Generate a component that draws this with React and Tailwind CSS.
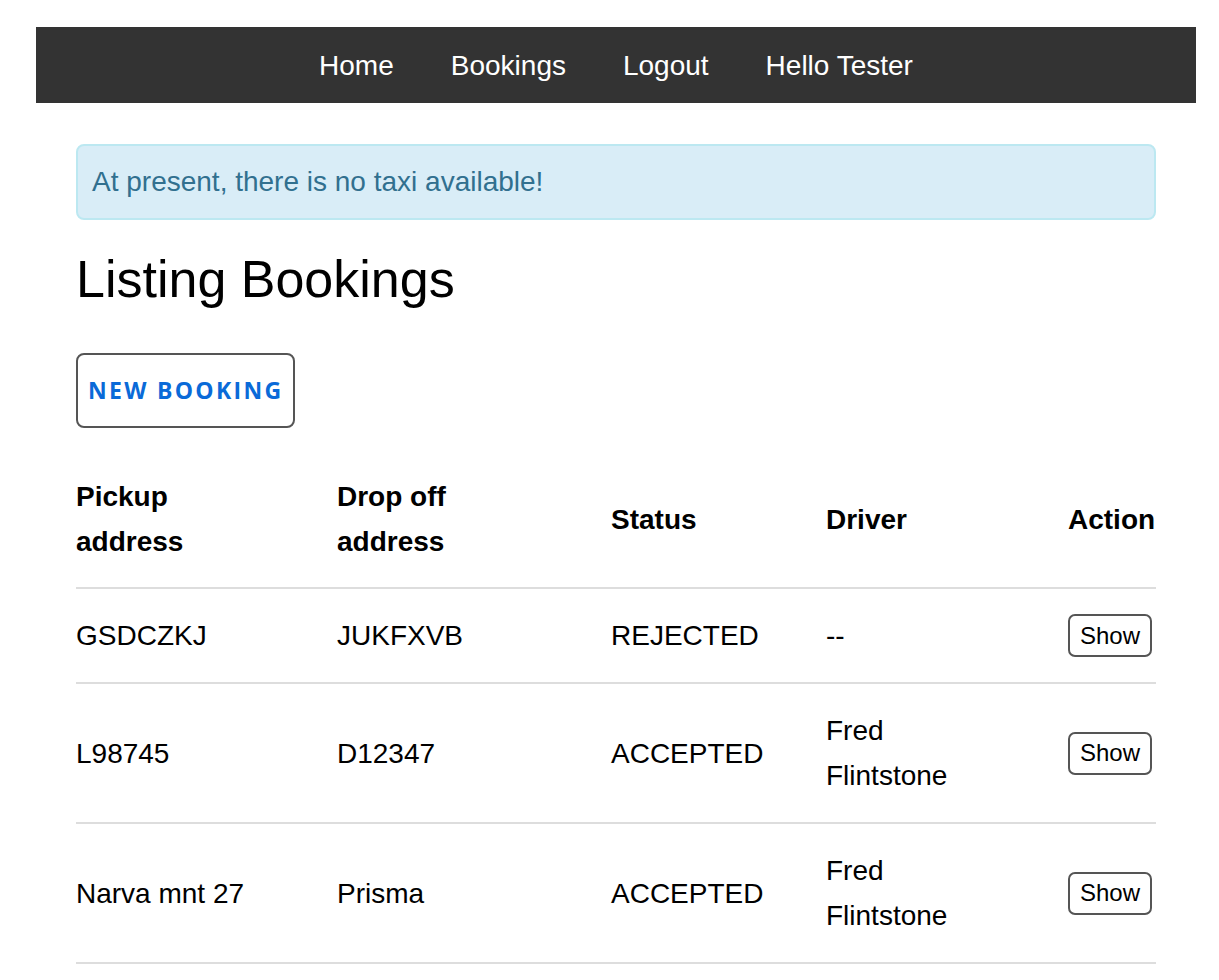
const bookings = [
  { pickup: 'GSDCZKJ', dropoff: 'JUKFXVB', status: 'REJECTED', driver: '--' },
  { pickup: 'L98745', dropoff: 'D12347', status: 'ACCEPTED', driver: 'Fred Flintstone' },
  { pickup: 'Narva mnt 27', dropoff: 'Prisma', status: 'ACCEPTED', driver: 'Fred Flintstone' },
]

const navLinks = ['Home', 'Bookings', 'Logout', 'Hello Tester']

export default function App() {
  return (
    <div className="min-h-screen bg-white pt-[27px] text-black font-['Liberation_Sans',Arial,sans-serif] text-[28px]">
      <nav className="ml-[36px] flex h-[76px] w-[1160px] items-center justify-center gap-[57px] bg-[#333333] pt-[2px]">
        {navLinks.map((link) => (
          <a key={link} href="#" className="leading-none text-white">
            {link}
          </a>
        ))}
      </nav>

      <main className="ml-[76px] w-[1080px]">
        <div className="mt-[41px] rounded-[8px] border-2 border-[#bce8f1] bg-[#d9edf7] px-[14px] py-[16px] leading-[40px] text-[#31708f]">
          At present, there is no taxi available!
        </div>

        <h1 className="mt-[29px] text-[52px] leading-[60px] font-normal">Listing Bookings</h1>

        <button className="mt-[44px] inline-flex h-[75px] items-center rounded-[8px] border-2 border-[#555] bg-white px-[10px] font-['Open_Sans',sans-serif] text-[23px] font-bold tracking-[2.3px] text-[#0a6ad8]">
          NEW BOOKING
        </button>

        <table className="mt-[23px] w-full table-fixed border-collapse leading-[45px]">
          <colgroup>
            <col className="w-[261px]" />
            <col className="w-[274px]" />
            <col className="w-[215px]" />
            <col className="w-[242px]" />
            <col className="w-[88px]" />
          </colgroup>
          <thead>
            <tr className="border-b-2 border-[#ddd]">
              <th className="py-[23px] pr-[60px] text-left align-middle font-bold">Pickup address</th>
              <th className="py-[23px] pr-[60px] text-left align-middle font-bold">Drop off address</th>
              <th className="py-[23px] pr-[30px] text-left align-middle font-bold">Status</th>
              <th className="py-[23px] pr-[60px] text-left align-middle font-bold">Driver</th>
              <th className="py-[23px] text-left align-middle font-bold">Action</th>
            </tr>
          </thead>
          <tbody>
            {bookings.map((b) => (
              <tr key={b.pickup} className="border-b-2 border-[#ddd]">
                <td className="py-6 pr-[60px] align-middle">{b.pickup}</td>
                <td className="py-6 pr-[60px] align-middle">{b.dropoff}</td>
                <td className="py-6 pr-[30px] align-middle">{b.status}</td>
                <td className="py-6 pr-[60px] align-middle">{b.driver}</td>
                <td className="py-6 align-middle">
                  <button className="flex h-[43px] items-center rounded-[7px] border-2 border-[#555] bg-white px-[10px] text-[24px] leading-none">
                    Show
                  </button>
                </td>
              </tr>
            ))}
          </tbody>
        </table>
      </main>
    </div>
  )
}
